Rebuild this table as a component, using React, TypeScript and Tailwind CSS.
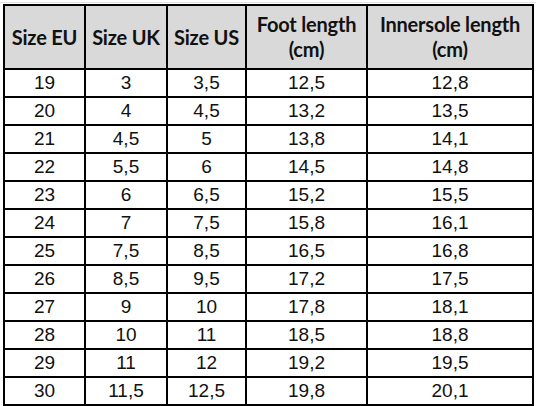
import React from "react";

const rows: string[][] = [
  ["19", "3", "3,5", "12,5", "12,8"],
  ["20", "4", "4,5", "13,2", "13,5"],
  ["21", "4,5", "5", "13,8", "14,1"],
  ["22", "5,5", "6", "14,5", "14,8"],
  ["23", "6", "6,5", "15,2", "15,5"],
  ["24", "7", "7,5", "15,8", "16,1"],
  ["25", "7,5", "8,5", "16,5", "16,8"],
  ["26", "8,5", "9,5", "17,2", "17,5"],
  ["27", "9", "10", "17,8", "18,1"],
  ["28", "10", "11", "18,5", "18,8"],
  ["29", "11", "12", "19,2", "19,5"],
  ["30", "11,5", "12,5", "19,8", "20,1"],
];

// largeurs des colonnes mesurées sur la capture
const widths = ["w-[81px]", "w-[82px]", "w-[79px]", "w-[121px]", "w-[166px]"];

export default function App() {
  return (
    <div className="w-[536px] h-[406px] bg-white overflow-hidden">
      <div className="h-[3px] border-b border-[#e2e2e2]" />
      <div className="pl-[3px] pt-[1px]">
        <table className="border-collapse table-fixed w-[530px]">
          <thead>
            <tr className="h-[64px] bg-[#d9d9d9]">
              {["Size EU", "Size UK", "Size US", "Foot length (cm)", "Innersole length (cm)"].map((h, i) => (
                <th
                  key={h}
                  className={`${widths[i]} border-2 border-black p-0 text-center align-middle font-bold text-[20px] leading-[25px] text-[#111] tracking-[-0.2px] [font-family:Lato,'Open_Sans',sans-serif]`}
                >
                  {i === 3 ? (
                    <>
                      Foot length
                      <br />
                      (cm)
                    </>
                  ) : i === 4 ? (
                    <>
                      Innersole length
                      <br />
                      (cm)
                    </>
                  ) : (
                    h
                  )}
                </th>
              ))}
            </tr>
          </thead>
          <tbody>
            {rows.map((r) => (
              <tr key={r[0]} className="h-[28px]">
                {r.map((c, i) => (
                  <td
                    key={i}
                    className="border-2 border-black p-0 text-center align-middle text-[19px] leading-[22px] text-[#111] [font-family:'Liberation_Sans',Arial,sans-serif]"
                  >
                    {c}
                  </td>
                ))}
              </tr>
            ))}
          </tbody>
        </table>
      </div>
    </div>
  );
}
